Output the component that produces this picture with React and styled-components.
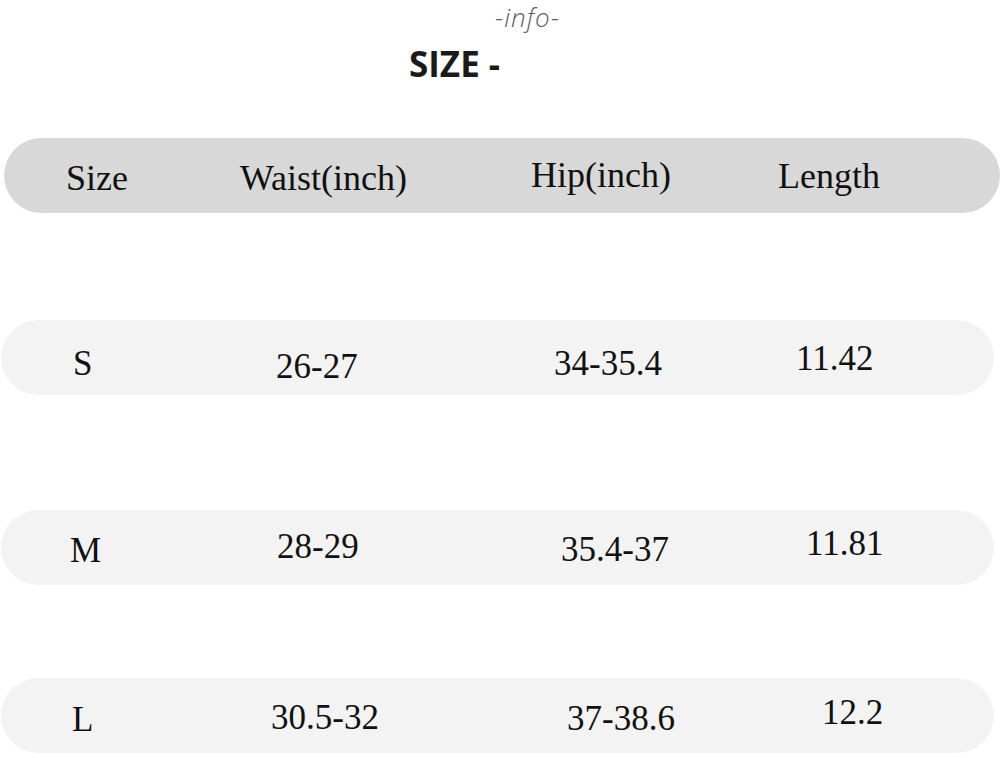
import styled, { createGlobalStyle } from "styled-components";

const Global = createGlobalStyle`
  body {
    margin: 0;
    background: #ffffff;
  }
`

const Page = styled.div`
  width: 1002px;
  height: 758px;
  overflow: hidden;
  display: flex;
  flex-direction: column;
  background: #ffffff;
`

const Heading = styled.div`
  display: flex;
  flex-direction: column;
`

const Info = styled.div`
  font-family: "Open Sans", sans-serif;
  font-style: italic;
  font-weight: 300;
  font-size: 26px;
  line-height: 34px;
  letter-spacing: 1px;
  color: #5e5e5e;
  padding-left: 495px;
`

const Title = styled.div`
  font-family: "Open Sans", sans-serif;
  font-weight: 700;
  font-size: 35px;
  line-height: 34px;
  color: #1a1a1a;
  margin-top: 13px;
  padding-left: 409px;
`

const Bar = styled.div`
  display: flex;
  height: 75px;
  margin: ${p => p.$top}px ${p => p.$right}px 0 ${p => p.$left}px;
  border-radius: 38px;
  background: ${p => (p.$head ? "#d8d8d8" : "#f3f3f3")};
  font-family: "Liberation Serif", "Times New Roman", serif;
  font-size: ${p => (p.$head ? 36 : 35)}px;
  line-height: 1;
  color: #111111;
`

const Cell = styled.div`
  width: ${p => p.$w}px;
  flex-shrink: 0;
  padding-left: ${p => p.$x}px;
  padding-top: ${p => p.$y}px;
  box-sizing: border-box;
  white-space: nowrap;
`

// column start (page x) and width
const cols = [
  { start: 0, w: 200 },
  { start: 200, w: 280 },
  { start: 480, w: 280 },
  { start: 760, w: 230 },
]

const rows = [
  {
    head: true, top: 57, left: 4, right: 2,
    cells: [["Size", 66, 22], ["Waist(inch)", 240, 22], ["Hip(inch)", 531, 19], ["Length", 778, 20]],
  },
  {
    top: 107, left: 1, right: 8,
    cells: [["S", 73, 26], ["26-27", 276, 29], ["34-35.4", 554, 26], ["11.42", 796, 21]],
  },
  {
    top: 115, left: 1, right: 8,
    cells: [["M", 70, 23], ["28-29", 277, 19], ["35.4-37", 561, 22], ["11.81", 806, 16]],
  },
  {
    top: 93, left: 1, right: 8,
    cells: [["L", 72, 24], ["30.5-32", 271, 22], ["37-38.6", 567, 23], ["12.2", 822, 17]],
  },
]

function App() {
  return (
    <Page>
      <Global />
      <Heading>
        <Info>-info-</Info>
        <Title>SIZE -</Title>
      </Heading>
      {rows.map((r, i) => (
        <Bar key={i} $head={r.head} $top={r.top} $left={r.left} $right={r.right}>
          {r.cells.map(([text, x, y], j) => (
            <Cell
              key={j}
              $w={j === 0 ? cols[0].w - r.left : cols[j].w}
              $x={x - cols[j].start - (j === 0 ? r.left : 0)}
              $y={y}
            >
              {text}
            </Cell>
          ))}
        </Bar>
      ))}
    </Page>
  );
}

export default App;
